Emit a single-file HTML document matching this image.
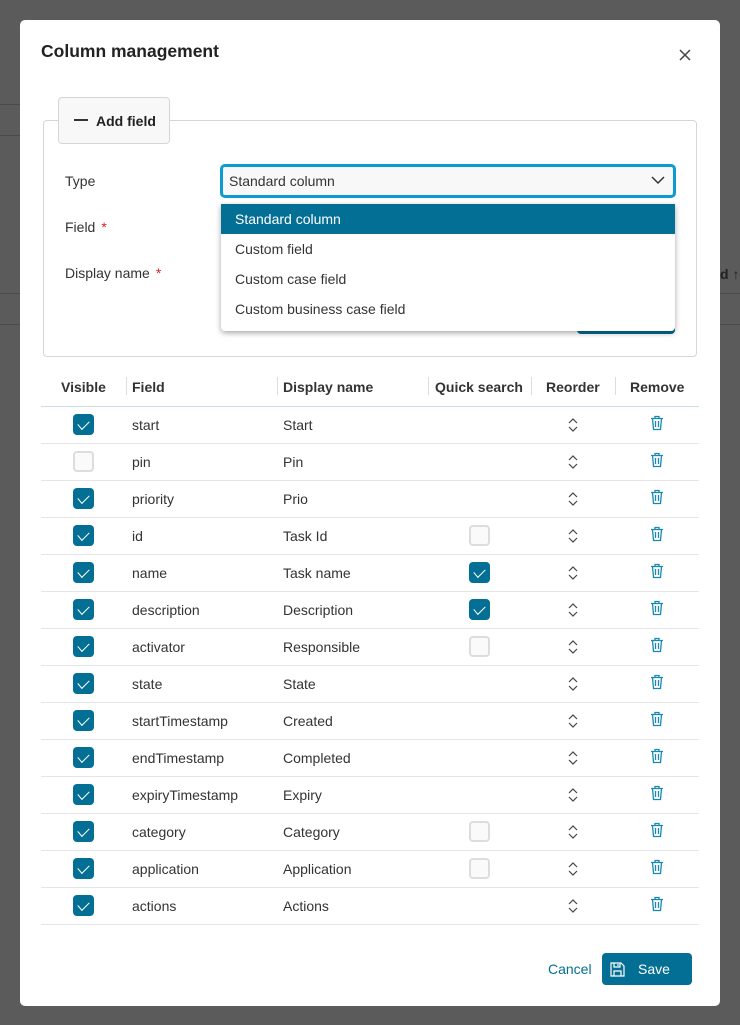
<!DOCTYPE html>
<html><head><style>
*{box-sizing:border-box;margin:0;padding:0}
body{width:740px;height:1025px;background:#5b5b5b;font-family:"Liberation Sans",sans-serif;position:relative;overflow:hidden;color:#333}
.bgl{position:absolute;left:0;width:20px;height:1px;background:#4a4a4a}
.bgr{position:absolute;left:720px;width:20px;height:1px;background:#4a4a4a}
.modal{position:absolute;left:20px;top:20px;width:700px;height:986px;background:#fff;border-radius:5px}
.abs{position:absolute}
h1{position:absolute;left:21px;top:21px;font-size:17.5px;font-weight:bold;color:#222}
.fs{position:absolute;left:23px;top:100px;width:654px;height:237px;border:1px solid #d6d6d6;border-radius:4px}
.legend{position:absolute;left:38px;top:77px;width:112px;height:47px;border:1px solid #d6d6d6;border-radius:4px;background:#f8f8f8;font-weight:bold;font-size:14px;color:#222}
.lbl{position:absolute;left:45px;font-size:14px;color:#333}
.req{color:#d22;margin-left:6px}
.sel{position:absolute;left:200px;top:144px;width:456px;height:34px;border:3px solid #0a9bd0;border-radius:5px;background:#f8f8f8}
.dd{position:absolute;left:201px;top:184px;width:454px;height:127px;background:#fff;box-shadow:0 2px 6px rgba(0,0,0,.35);border-radius:0 0 4px 4px}
.opt{height:30px;line-height:30px;padding-left:14px;font-size:14px;color:#333}
.opt.a{background:#036f94;color:#fff}
.th{position:absolute;top:359px;font-size:14px;font-weight:bold;color:#333}
.sep{position:absolute;top:357px;width:1px;height:18px;background:#ddd}
.row{position:absolute;left:21px;width:658px;height:37px;border-bottom:1px solid #e6e6e6;font-size:14px}
.row span{position:absolute;top:10px}
.cb{position:absolute;width:21px;height:21px;border-radius:4px;top:7px}
.cb.on{background:#036f94}
.cb.off{border:2px solid #ddd;background:#fafafa}
.cb.on::after{content:"";position:absolute;left:5px;top:3px;width:10px;height:6px;border-left:1.5px solid #fff;border-bottom:1.5px solid #fff;transform:translateY(3px) rotate(-45deg) skewX(-5deg)}
.btn{position:absolute;left:582px;top:933px;width:90px;height:32px;background:#036f94;border-radius:4px;color:#fff;font-size:14px}
</style></head><body>
<div class="bgl" style="top:104px"></div><div class="bgl" style="top:135px"></div><div class="bgl" style="top:293px"></div><div class="bgl" style="top:324px"></div>
<div class="bgr" style="top:293px"></div><div class="bgr" style="top:324px"></div>
<div class="abs" style="left:720px;top:266px;font-size:14px;font-weight:bold;color:#222">d ↑</div>
<div class="modal">
<h1>Column management</h1>
<svg class="abs" style="left:659px;top:29px" width="12" height="12" viewBox="0 0 12 12"><path d="M1 1L11 11M11 1L1 11" stroke="#444" stroke-width="1.5"/></svg>
<div class="fs"></div>
<div class="legend"><div class="abs" style="left:15px;top:21px;width:14px;height:2px;background:#333"></div><div class="abs" style="left:37px;top:15px">Add field</div></div>
<div class="lbl" style="top:199px">Field<span class="req">*</span></div>
<div class="lbl" style="top:153px">Type</div>
<div class="lbl" style="top:245px">Display name<span class="req">*</span></div>
<div class="abs" style="left:557px;top:300px;width:98px;height:14px;background:#036f94;border-radius:0 0 4px 4px"></div>
<div class="sel"><div class="abs" style="left:6px;top:6px;font-size:14px">Standard column</div>
<svg class="abs" style="left:428px;top:9px" width="14" height="9" viewBox="0 0 14 9"><path d="M1 1L7 7L13 1" fill="none" stroke="#333" stroke-width="1.5"/></svg></div>
<div class="dd"><div class="opt a">Standard column</div><div class="opt">Custom field</div><div class="opt">Custom case field</div><div class="opt">Custom business case field</div></div>

<div class="th" style="left:41px">Visible</div>
<div class="sep" style="left:106px"></div><div class="th" style="left:112px">Field</div>
<div class="sep" style="left:257px"></div><div class="th" style="left:263px">Display name</div>
<div class="sep" style="left:408px"></div><div class="th" style="left:415px">Quick search</div>
<div class="sep" style="left:511px"></div><div class="th" style="left:526px">Reorder</div>
<div class="sep" style="left:595px"></div><div class="th" style="left:610px">Remove</div>
<div class="abs" style="left:21px;top:386px;width:658px;height:1px;background:#c8dde6"></div>
<div id="rows"></div>
<div class="abs" style="left:528px;top:941px;font-size:14px;color:#036f94">Cancel</div>
<div class="btn"><svg class="abs" style="left:8px;top:9px" width="15" height="15" viewBox="0 0 15 15"><path d="M1 1H11L14 4V14H1Z M4 1V5H10V1 M4 14V9H11V14 M8 2V4" fill="none" stroke="#fff" stroke-width="1.2"/></svg><div class="abs" style="left:36px;top:8px">Save</div></div>
</div>
<script>
var d=[["on","start","Start",""],["off","pin","Pin",""],["on","priority","Prio",""],["on","id","Task Id","off"],["on","name","Task name","on"],["on","description","Description","on"],["on","activator","Responsible","off"],["on","state","State",""],["on","startTimestamp","Created",""],["on","endTimestamp","Completed",""],["on","expiryTimestamp","Expiry",""],["on","category","Category","off"],["on","application","Application","off"],["on","actions","Actions",""]];
var h="";
d.forEach(function(r,i){var t=387+i*37;
h+='<div class="row" style="top:'+t+'px"><div class="cb '+r[0]+'" style="left:32px"></div><span style="left:91px">'+r[1]+'</span><span style="left:242px">'+r[2]+'</span>'+(r[3]?'<div class="cb '+r[3]+'" style="left:428px"></div>':'')+
'<svg style="position:absolute;left:526px;top:10px" width="12" height="16" viewBox="0 0 12 16"><path d="M2 6L6 2L10 6M2 10L6 14L10 10" fill="none" stroke="#444" stroke-width="1.2"/></svg>'+
'<svg style="position:absolute;left:609px;top:8px" width="14" height="16" viewBox="0 0 14 16"><path d="M1 3.5H13M5 3.5V1.5H9V3.5M2.5 3.5L3.5 14.5H10.5L11.5 3.5M5.5 6V12M8.5 6V12" fill="none" stroke="#1789b5" stroke-width="1.3"/></svg></div>';});
document.getElementById("rows").innerHTML=h;
</script>
</body></html>
